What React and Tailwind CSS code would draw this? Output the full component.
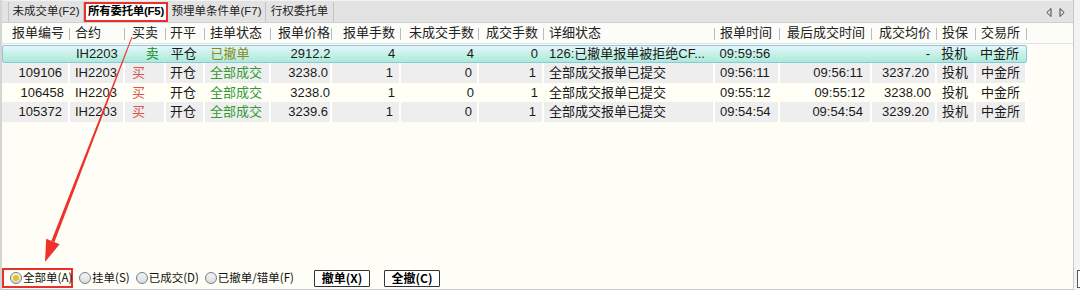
import React from "react";

// Order list panel (futures client) with a red annotation arrow
const cols = [
  { key: "id", title: "报单编号", w: "w-[68px]", align: "text-right pr-[6px]" },
  { key: "sym", title: "合约", w: "w-[55px]", align: "text-left pl-[5px]" },
  { key: "side", title: "买卖", w: "w-[41px]", align: "text-left pl-[7px]" },
  { key: "oc", title: "开平", w: "w-[39px]", align: "text-left pl-[4px]" },
  { key: "st", title: "挂单状态", w: "w-[66px]", align: "text-left pl-[5px]" },
  { key: "px", title: "报单价格", w: "w-[61px]", align: "text-right pr-[2px]" },
  { key: "qty", title: "报单手数", w: "w-[69px]", align: "text-right pr-[6px]" },
  { key: "left", title: "未成交手数", w: "w-[78px]", align: "text-right pr-[5px]" },
  { key: "done", title: "成交手数", w: "w-[65px]", align: "text-right pr-[6px]" },
  { key: "msg", title: "详细状态", w: "w-[171px]", align: "text-left pl-[5px]" },
  { key: "t", title: "报单时间", w: "w-[65px]", align: "text-left pl-[5px]" },
  { key: "lt", title: "最后成交时间", w: "w-[92px]", align: "text-right pr-[7px]" },
  { key: "avg", title: "成交均价", w: "w-[65px]", align: "text-right pr-[6px]" },
  { key: "hedge", title: "投保", w: "w-[39px]", align: "text-left pl-[5px]" },
  { key: "ex", title: "交易所", w: "w-[51px]", align: "text-left pl-[5px]" },
];

const rows = [
  { id: "", sym: "IH2203", side: "卖", oc: "平仓", st: "已撤单", px: "2912.2", qty: "4", left: "4", done: "0", msg: "126:已撤单报单被拒绝CF...", t: "09:59:56", lt: "", avg: "-", hedge: "投机", ex: "中金所" },
  { id: "109106", sym: "IH2203", side: "买", oc: "开仓", st: "全部成交", px: "3238.0", qty: "1", left: "0", done: "1", msg: "全部成交报单已提交", t: "09:56:11", lt: "09:56:11", avg: "3237.20", hedge: "投机", ex: "中金所" },
  { id: "106458", sym: "IH2203", side: "买", oc: "开仓", st: "全部成交", px: "3238.0", qty: "1", left: "0", done: "1", msg: "全部成交报单已提交", t: "09:55:12", lt: "09:55:12", avg: "3238.00", hedge: "投机", ex: "中金所" },
  { id: "105372", sym: "IH2203", side: "买", oc: "开仓", st: "全部成交", px: "3239.6", qty: "1", left: "0", done: "1", msg: "全部成交报单已提交", t: "09:54:54", lt: "09:54:54", avg: "3239.20", hedge: "投机", ex: "中金所" },
];

function cellColor(key, row) {
  if (key === "side") return row.side === "卖" ? "text-[#1f8a2a] pl-[20px]" : "text-[#d9534f]";
  if (key === "st") return row.st === "已撤单" ? "text-[#8c8a1c]" : "text-[#2f9a36]";
  return "text-[#1a1a1a]";
}

function Radio({ checked, label }) {
  return (
    <label className="flex items-center gap-[1px] text-[11.5px] leading-none whitespace-nowrap text-[#111]">
      <span className="shrink-0 w-[12px] h-[12px] rounded-full border border-[#6e7f95] bg-gradient-to-b from-[#f4f4f4] to-[#dcdcdc] flex items-center justify-center">
        {checked && <span className="w-[6px] h-[6px] rounded-full bg-[#e8c21a]" />}
      </span>
      {label}
    </label>
  );
}

export default function App() {
  return (
    <div className="relative w-[1080px] h-[290px] flex bg-white overflow-hidden font-['Liberation_Sans','Noto_Sans_CJK_SC',sans-serif]">
      {/* Main panel */}
      <div className="w-[1073px] h-[290px] flex flex-col border-l-2 border-[#d4d4d4] border-b border-b-[#c8c8c8] bg-[#fefef6]">
        {/* Tabs */}
        <div className="h-[23px] flex items-end pl-[6px] bg-[#e3e3e3] border-t border-[#f2f2f2] border-b border-b-[#d0d0d0] text-[11.5px] whitespace-nowrap">
          <div className="h-[20px] w-[76px] flex items-center justify-center border-l border-r border-[#c4c4c4] text-[#222]">未成交单(F2)</div>
          <div className="h-[20px] w-[84px] flex items-center justify-center bg-white border-2 border-[#e8312b] font-bold text-black tracking-[-0.3px]">所有委托单(F5)</div>
          <div className="h-[20px] w-[98px] flex items-center justify-center border-r border-[#c4c4c4] text-[#222]">预埋单条件单(F7)</div>
          <div className="h-[20px] w-[68px] flex items-center justify-center border-r border-[#c4c4c4] text-[#222]">行权委托单</div>
          <div className="flex-1" />
          <div className="h-[20px] flex items-center gap-[7px] pr-[8px]">
            <svg width="6" height="9" viewBox="0 0 6 9"><path d="M5 0.5 L0.8 4.5 L5 8.5 Z" fill="none" stroke="#444" strokeWidth="1" /></svg>
            <svg width="6" height="9" viewBox="0 0 6 9"><path d="M1 0.5 L5.2 4.5 L1 8.5 Z" fill="none" stroke="#444" strokeWidth="1" /></svg>
          </div>
        </div>

        {/* Header */}
        <div className="h-[21px] flex items-center bg-[#fcfcf8] border-b border-[#e2e2e2] text-[13px] text-[#222]">
          {cols.map((c) => (
            <div key={c.key} className={`${c.w} h-full flex items-center relative`}>
              <span className={`w-full ${c.align} whitespace-nowrap`}>{c.title}</span>
              <span className="absolute right-0 top-[5px] h-[12px] w-px bg-[#bdbdbd]" />
            </div>
          ))}
        </div>

        {/* Rows */}
        <div className="flex flex-col pt-px text-[13px]">
          {rows.map((r, i) => {
            const sel = i === 0;
            const rowBg = sel
              ? "bg-gradient-to-b from-[#e4f6fb] to-[#a9ebd7] border border-[#8ec7dc] rounded-[2px]"
              : i % 2 === 1
              ? "bg-[#eeeeee]"
              : "bg-[#fffff6]";
            return (
              <div key={i} className={`w-[1025px] ${sel ? "h-[18px]" : "h-[19.5px]"} flex items-center ${rowBg}`}>
                {cols.map((c) => (
                  <div
                    key={c.key}
                    className={`${c.w} h-full flex items-center ${!sel && i % 2 === 1 ? "border-r-2 border-white" : ""}`}
                  >
                    <span className={`w-full ${c.align} whitespace-nowrap ${cellColor(c.key, r)}`}>{r[c.key]}</span>
                  </div>
                ))}
              </div>
            );
          })}
        </div>

        <div className="flex-1" />

        {/* Bottom filter bar */}
        <div className="h-[20px] flex items-center mb-px font-['Noto_Sans_CJK_SC',sans-serif]">
          <div className="h-[20px] w-[71px] flex items-center pl-[6px] border-2 border-[#e8312b]">
            <Radio checked label="全部单(A)" />
          </div>
          <div className="ml-[6px] flex items-center gap-[6px]">
            <Radio label="挂单(S)" />
            <Radio label="已成交(D)" />
            <Radio label="已撤单/错单(F)" />
          </div>
          <button className="ml-[20px] h-[17px] w-[56px] border border-[#333] bg-white text-[12px] font-bold leading-none rounded-[1px] whitespace-nowrap">撤单(X)</button>
          <button className="ml-[14px] h-[17px] w-[56px] border border-[#333] bg-white text-[12px] font-bold leading-none rounded-[1px] whitespace-nowrap">全撤(C)</button>
        </div>
      </div>

      {/* Right neighbour panel edge */}
      <div className="flex-1 flex flex-col bg-[#f3f3f3] border-l border-[#c9c9c9]">
        <div className="flex-1" />
        <div className="h-[18px] ml-[3px] mb-[2px] border border-r-0 border-[#555] bg-white" />
      </div>

      {/* Annotation arrow */}
      <svg className="absolute left-0 top-0 pointer-events-none" width="1080" height="290">
        <polygon points="132.5,37 131.5,37 51.3,241 54.5,242.1" fill="#f0302a" />
        <polygon points="45,262 46.2,238.8 59.6,244.2" fill="#f0302a" />
      </svg>
    </div>
  );
}
